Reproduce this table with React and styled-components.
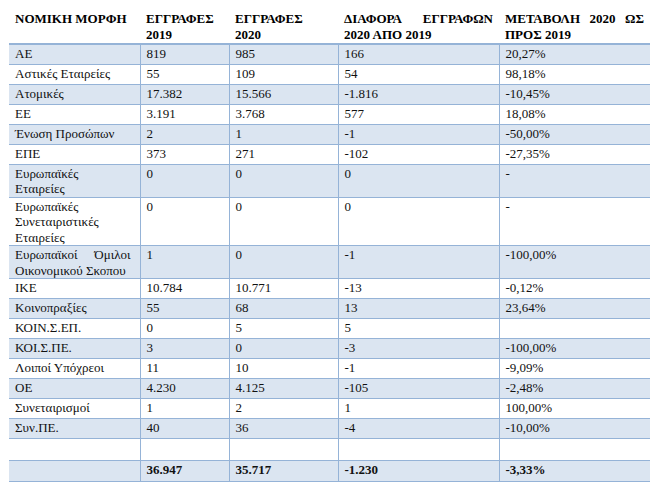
import React from 'react';
import styled, { createGlobalStyle } from 'styled-components';

const serif = '"Liberation Serif", "Times New Roman", serif';

const GlobalStyle = createGlobalStyle`
  html, body {
    margin: 0;
    padding: 0;
    background: #ffffff;
  }
  body {
    font-family: ${serif};
    color: #111111;
  }
`;

const widths = [131, 89, 109, 161, 151];

const rows = [
  ['ΑΕ', '819', '985', '166', '20,27%'],
  ['Αστικές Εταιρείες', '55', '109', '54', '98,18%'],
  ['Ατομικές', '17.382', '15.566', '-1.816', '-10,45%'],
  ['ΕΕ', '3.191', '3.768', '577', '18,08%'],
  ['Ένωση Προσώπων', '2', '1', '-1', '-50,00%'],
  ['ΕΠΕ', '373', '271', '-102', '-27,35%'],
  ['Ευρωπαϊκές Εταιρείες', '0', '0', '0', '-'],
  ['Ευρωπαϊκές Συνεταιριστικές Εταιρείες', '0', '0', '0', '-'],
  ['Ευρωπαϊκοί Όμιλοι Οικονομικού Σκοπου', '1', '0', '-1', '-100,00%'],
  ['ΙΚΕ', '10.784', '10.771', '-13', '-0,12%'],
  ['Κοινοπραξίες', '55', '68', '13', '23,64%'],
  ['ΚΟΙΝ.Σ.ΕΠ.', '0', '5', '5', ''],
  ['ΚΟΙ.Σ.ΠΕ.', '3', '0', '-3', '-100,00%'],
  ['Λοιποί Υπόχρεοι', '11', '10', '-1', '-9,09%'],
  ['ΟΕ', '4.230', '4.125', '-105', '-2,48%'],
  ['Συνεταιρισμοί', '1', '2', '1', '100,00%'],
  ['Συν.ΠΕ.', '40', '36', '-4', '-10,00%'],
];

const Page = styled.div`
  padding: 10px 0 0 9px;
`;

const Table = styled.table`
  border-collapse: collapse;
  table-layout: fixed;
  width: ${widths.reduce((a, b) => a + b, 0)}px;
  font-family: ${serif};
  font-size: 13px;
  line-height: 15.5px;
  color: #111111;
`;

const Col = styled.col`
  width: ${(p) => p.$w}px;
`;

const HeadCell = styled.th`
  font-family: ${serif};
  font-weight: bold;
  text-align: justify;
  vertical-align: top;
  padding: 1px ${(p) => (p.$first ? 9 : 6)}px 1px 6px;
  color: #000000;
  border-bottom: 2px solid #95b3d7;
`;

const Row = styled.tr`
  height: ${(p) => p.$h || 20}px;
  background: ${(p) => (p.$band ? '#dbe5f1' : '#ffffff')};
  border-bottom: 1px solid #95b3d7;
`;

const Cell = styled.td`
  font-family: ${serif};
  vertical-align: top;
  text-align: justify;
  padding: 1px ${(p) => (p.$first ? 9 : 6)}px 0 6px;
  font-weight: ${(p) => (p.$bold ? 'bold' : 'normal')};
  border-left: ${(p) => (p.$first ? 'none' : '1px solid #95b3d7')};
`;

const App = () => {
  return (
    <Page>
      <GlobalStyle />
      <Table>
        <colgroup>
          {widths.map((w, i) => <Col key={i} $w={w} />)}
        </colgroup>
        <thead>
          <tr>
            <HeadCell $first>ΝΟΜΙΚΗ ΜΟΡΦΗ</HeadCell>
            <HeadCell>ΕΓΓΡΑΦΕΣ<br />2019</HeadCell>
            <HeadCell>ΕΓΓΡΑΦΕΣ<br />2020</HeadCell>
            <HeadCell>ΔΙΑΦΟΡΑ ΕΓΓΡΑΦΩΝ 2020 ΑΠΟ 2019</HeadCell>
            <HeadCell>ΜΕΤΑΒΟΛΗ 2020 ΩΣ ΠΡΟΣ 2019</HeadCell>
          </tr>
        </thead>
        <tbody>
          {rows.map((r, i) => (
            <Row key={r[0]} $band={i % 2 === 0}>
              {r.map((c, j) => (
                <Cell key={j} $first={j === 0}>{c}</Cell>
              ))}
            </Row>
          ))}
          <Row $h={22}>
            {widths.map((w, j) => <Cell key={j} $first={j === 0} />)}
          </Row>
          <Row $band $h={21}>
            <Cell $first />
            <Cell $bold>36.947</Cell>
            <Cell $bold>35.717</Cell>
            <Cell $bold>-1.230</Cell>
            <Cell $bold>-3,33%</Cell>
          </Row>
        </tbody>
      </Table>
    </Page>
  );
};

export default App;
